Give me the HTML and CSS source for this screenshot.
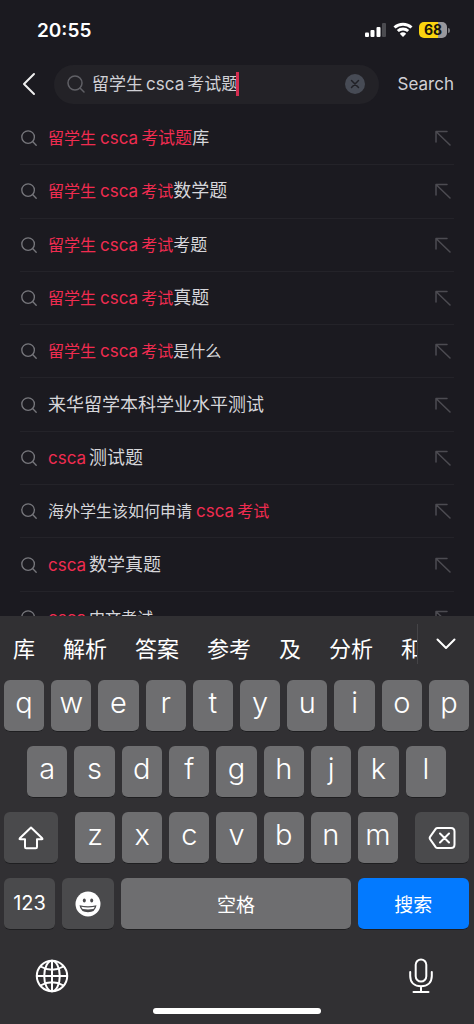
FILE: index.html
```html
<!DOCTYPE html>
<html lang="zh-CN">
<head>
<meta charset="utf-8">
<meta name="viewport" content="width=device-width, initial-scale=1">
<title>Search</title>
<link rel="stylesheet" href="styles.css">
</head>
<body>
<svg class="defs" aria-hidden="true">
  <symbol id="magnifier" viewBox="0 0 20 20"><circle cx="9" cy="9" r="7"/><path d="M14 14l4 4"/></symbol>
  <symbol id="fill" viewBox="0 0 16 16"><path d="M1 12V1.500H12M1.500 2L15 15"/></symbol>
</svg>
<div class="app">
  <header class="status">
    <time class="clock">20:55</time>
    <div class="indicators">
      <svg class="signal" viewBox="0 0 22 16" aria-hidden="true"><rect x="0" y="10.500" width="4" height="4.500" rx="1"/><rect x="5.500" y="8" width="4" height="7" rx="1"/><rect x="11.500" y="5" width="4" height="10" rx="1"/><rect class="off" x="17" y="1" width="4" height="14" rx="1"/></svg>
      <svg class="wifi" viewBox="0 0 20 16" aria-hidden="true"><path class="arc" d="M1.500 5.500a12.500 12.500 0 0 1 17 0M4.800 9a7.700 7.700 0 0 1 10.400 0"/><path d="M10 15l-3.200-3.300a4.700 4.700 0 0 1 6.400 0z"/></svg>
      <div class="battery"><span class="level">68</span><span class="cap"></span></div>
    </div>
  </header>

  <form class="searchbar" role="search">
    <button type="button" class="back" aria-label="返回"><svg viewBox="0 0 14 24"><path d="M12 2L2 12l10 10"/></svg></button>
    <div class="field">
      <svg class="lens"><use href="#magnifier"/></svg>
      <div class="entry">
        <input type="text" class="query" aria-label="搜索" value="留学生&#8201;csca&#8201;考试题">
        <span class="caret"></span>
      </div>
      <button type="button" class="clear" aria-label="清除"><svg viewBox="0 0 20 20"><circle cx="10" cy="10" r="10"/><path d="M6.500 6.500l7 7m0-7l-7 7"/></svg></button>
    </div>
    <button type="submit" class="submit">Search</button>
  </form>

  <main class="results">
    <ul class="list">
      <li class="row"><svg class="mag"><use href="#magnifier"/></svg><a href="#" class="text"><em><span class="s">留学生</span><b>csca</b><span class="m">考试题</span></em><span class="m">库</span></a><button type="button" class="fill" aria-label="填入"><svg><use href="#fill"/></svg></button></li>
      <li class="row"><svg class="mag"><use href="#magnifier"/></svg><a href="#" class="text"><em><span class="s">留学生</span><b>csca</b><span class="s">考试</span></em>数学题</a><button type="button" class="fill" aria-label="填入"><svg><use href="#fill"/></svg></button></li>
      <li class="row"><svg class="mag"><use href="#magnifier"/></svg><a href="#" class="text"><em><span class="s">留学生</span><b>csca</b><span class="s">考试</span></em><span class="m">考题</span></a><button type="button" class="fill" aria-label="填入"><svg><use href="#fill"/></svg></button></li>
      <li class="row"><svg class="mag"><use href="#magnifier"/></svg><a href="#" class="text"><em><span class="s">留学生</span><b>csca</b><span class="s">考试</span></em>真题</a><button type="button" class="fill" aria-label="填入"><svg><use href="#fill"/></svg></button></li>
      <li class="row"><svg class="mag"><use href="#magnifier"/></svg><a href="#" class="text"><em><span class="s">留学生</span><b>csca</b><span class="s">考试</span></em><span class="s">是什么</span></a><button type="button" class="fill" aria-label="填入"><svg><use href="#fill"/></svg></button></li>
      <li class="row"><svg class="mag"><use href="#magnifier"/></svg><a href="#" class="text">来华留学本科学业水平测试</a><button type="button" class="fill" aria-label="填入"><svg><use href="#fill"/></svg></button></li>
      <li class="row"><svg class="mag"><use href="#magnifier"/></svg><a href="#" class="text"><em><b class="lead">csca</b></em>测试题</a><button type="button" class="fill" aria-label="填入"><svg><use href="#fill"/></svg></button></li>
      <li class="row"><svg class="mag"><use href="#magnifier"/></svg><a href="#" class="text"><span class="s">海外学生该如何申请</span><em><b>csca</b><span class="s">考试</span></em></a><button type="button" class="fill" aria-label="填入"><svg><use href="#fill"/></svg></button></li>
      <li class="row"><svg class="mag"><use href="#magnifier"/></svg><a href="#" class="text"><em><b class="lead">csca</b></em>数学真题</a><button type="button" class="fill" aria-label="填入"><svg><use href="#fill"/></svg></button></li>
      <li class="row"><svg class="mag"><use href="#magnifier"/></svg><a href="#" class="text"><em><b class="lead">csca</b></em><span class="s">中文考试</span></a><button type="button" class="fill" aria-label="填入"><svg><use href="#fill"/></svg></button></li>
    </ul>
  </main>

  <section class="keyboard" aria-label="键盘">
    <div class="candidates">
      <div class="words"><button type="button">库</button><button type="button">解析</button><button type="button">答案</button><button type="button">参考</button><button type="button">及</button><button type="button">分析</button><button type="button">和</button></div>
      <button type="button" class="expand" aria-label="展开"><svg viewBox="0 0 20 12"><path d="M1.500 1.500L10 10l8.500-8.500"/></svg></button>
    </div>
    <div class="keys">
      <div class="keyrow"><button type="button" class="key">q</button><button type="button" class="key">w</button><button type="button" class="key">e</button><button type="button" class="key">r</button><button type="button" class="key">t</button><button type="button" class="key">y</button><button type="button" class="key">u</button><button type="button" class="key">i</button><button type="button" class="key">o</button><button type="button" class="key">p</button></div>
      <div class="keyrow inset"><button type="button" class="key">a</button><button type="button" class="key">s</button><button type="button" class="key">d</button><button type="button" class="key">f</button><button type="button" class="key">g</button><button type="button" class="key">h</button><button type="button" class="key">j</button><button type="button" class="key">k</button><button type="button" class="key">l</button></div>
      <div class="keyrow third">
        <button type="button" class="key dark side" aria-label="大写"><svg class="shift" viewBox="0 0 26 24"><path d="M13 1.500L1.800 12.300q-.7 .9 .4 .9H7v7.800q0 1.200 1.200 1.200h9.600q1.200 0 1.200-1.200v-7.800h4.800q1.100 0 .4-.9z"/></svg></button>
        <div class="keyrow letters"><button type="button" class="key">z</button><button type="button" class="key">x</button><button type="button" class="key">c</button><button type="button" class="key">v</button><button type="button" class="key">b</button><button type="button" class="key">n</button><button type="button" class="key">m</button></div>
        <button type="button" class="key dark side" aria-label="删除"><svg class="delete" viewBox="0 0 28 24"><path d="M9.500 2H23q3.500 0 3.500 3.500v13Q26.500 22 23 22H9.500q-1 0-1.800-.8L2.200 13.400q-1-1.400 0-2.800L7.700 2.800Q8.500 2 9.500 2zM12 7.500l9 9m0-9l-9 9"/></svg></button>
      </div>
      <div class="keyrow bottom">
        <button type="button" class="key dark num">123</button>
        <button type="button" class="key dark" aria-label="表情"><svg class="smile" viewBox="0 0 26 26"><circle class="face" cx="13" cy="13" r="12.500"/><ellipse cx="9.300" cy="9.500" rx="1.500" ry="2.100"/><ellipse cx="16.700" cy="9.500" rx="1.500" ry="2.100"/><path d="M4.500 14.200q8.500 2.300 17 0-1 7-8.500 7t-8.500-7z"/><path class="teeth" d="M6.300 15.800q6.700 1.500 13.400 0-.5 1.800-1.400 2.200-5.300.9-10.600 0-1-.6-1.400-2.200z"/></svg></button>
        <button type="button" class="key word">空格</button>
        <button type="button" class="key word blue">搜索</button>
      </div>
    </div>
    <div class="tools">
      <button type="button" class="tool" aria-label="切换键盘"><svg class="globe" viewBox="0 0 34 34"><circle cx="17" cy="17" r="15.200"/><ellipse cx="17" cy="17" rx="7.800" ry="15.200"/><path d="M17 1.800v30.400M1.800 17h30.400M5.500 7.500q11.500 6.500 23 0M5.500 26.500q11.500-6.500 23 0"/></svg></button>
      <button type="button" class="tool" aria-label="听写"><svg class="mic" viewBox="0 0 24 36"><rect x="6.700" y="1.500" width="10.600" height="22" rx="5.300"/><path d="M1.200 14v4c0 6.500 4.300 10.300 10.800 10.300s10.800-3.800 10.800-10.300v-4M12 28.300v5.700M4.500 34h15"/></svg></button>
    </div>
    <div class="home"></div>
  </section>
</div>
</body>
</html>
```
FILE: styles.css
```css
* { box-sizing: border-box; }
body {
  margin: 0;
  background: #1b1a20;
  color: #d6d6da;
  font-family: Inter, "Noto Sans CJK SC", sans-serif;
}
button { padding: 0; border: 0; background: none; color: inherit; font: inherit; }
svg { display: block; fill: none; stroke-linecap: round; stroke-linejoin: round; }
.defs { position: absolute; width: 0; height: 0; }
.app { display: flex; flex-direction: column; height: 100vh; overflow: hidden; }

.status {
  display: flex;
  flex: none;
  align-items: center;
  justify-content: space-between;
  height: 60px;
  padding: 0 24px 0 37px;
  color: #fff;
}
.clock { font-size: 19px; font-weight: 600; }
.indicators { display: flex; align-items: center; gap: 6px; }
.signal { width: 22px; height: 16px; fill: #fff; }
.signal .off { fill: #4b4b50; }
.wifi { width: 20px; height: 16px; fill: #fff; }
.wifi .arc { fill: none; stroke: #fff; stroke-width: 3; stroke-linecap: butt; }
.battery { display: flex; align-items: center; gap: 1px; }
.level {
  width: 28px;
  border-radius: 5px;
  background: linear-gradient(90deg, #fbd40f 68%, #98979c 68%);
  color: #17150a;
  font-size: 14px;
  font-weight: 700;
  line-height: 16px;
  text-align: center;
}
.cap { width: 2px; height: 5px; border-radius: 0 2px 2px 0; background: #77777b; }

.searchbar {
  display: flex;
  flex: none;
  align-items: center;
  height: 52px;
  padding: 0 20px 4px 22px;
}
.back { width: 14px; height: 24px; margin-right: 18px; }
.back svg { width: 14px; height: 24px; stroke: #eee; stroke-width: 2; }
.field {
  display: flex;
  flex: 1;
  align-items: center;
  min-width: 0;
  height: 39px;
  padding: 0 14px 0 12px;
  border-radius: 20px;
  background: #232227;
}
.lens { width: 20px; height: 20px; stroke: #606066; stroke-width: 1.5; }
.entry { position: relative; flex: 1; min-width: 0; margin-left: 6px; }
.query {
  display: block;
  width: 100%;
  padding: 0;
  border: 0;
  outline: 0;
  background: none;
  color: #d0d0d5;
  font: 17px/24px Inter, "Noto Sans CJK SC", sans-serif;
}
.caret { position: absolute; top: 0; left: 144px; width: 3px; height: 24px; background: #d52d50; }
.clear svg { width: 20px; height: 20px; fill: #474b55; stroke: #202026; stroke-width: 1.5; }
.clear circle { stroke: none; }
.submit { margin-left: 19px; color: #d0d0d5; font-size: 17px; }

.results { flex: 1; min-height: 0; overflow: hidden; }
.list {
  display: grid;
  grid-template-rows: repeat(10, 1fr);
  height: calc(100% + 29px);
  margin: 0;
  padding: 0 20px;
  list-style: none;
}
.row { display: flex; align-items: center; border-bottom: 1px solid #242329; }
.mag { flex: none; width: 18px; height: 18px; stroke: #77777c; stroke-width: 1.5; }
.text {
  flex: 1;
  margin-left: 10px;
  color: #d6d6da;
  font-size: 18px;
  line-height: 26px;
  text-decoration: none;
  white-space: nowrap;
}
.text em { color: #f02c50; font-style: normal; }
.text b { margin: 0 3px 0 4px; font-size: 17px; font-weight: 400; }
.text .lead { margin-left: 0; }
.s { font-size: 16px; }
.m { font-size: 17px; }
.fill svg { width: 16px; height: 16px; margin-right: 3px; stroke: #4c4b51; stroke-width: 1.5; }

.keyboard { flex: none; background: #313033; color: #fff; }
.candidates { display: flex; height: 64px; padding-top: 8px; }
.words {
  display: flex;
  flex: 1;
  gap: 28px;
  min-width: 0;
  height: 40px;
  padding: 9px 0 0 13px;
  overflow: hidden;
  border-right: 1px solid #454447;
  font-size: 22px;
  line-height: 32px;
}
.words button { flex: none; white-space: nowrap; }
.expand { width: 56px; height: 40px; }
.expand svg { width: 20px; height: 12px; margin: 0 auto; stroke: #fff; stroke-width: 2; }
.keys { display: flex; flex-direction: column; gap: 14px; padding: 0 5px 0 4px; }
.keyrow { display: flex; gap: 7px; }
.inset { padding: 0 23px; }
.third { gap: 17px; }
.letters { flex: 1; }
.key {
  display: flex;
  flex: 1;
  align-items: center;
  justify-content: center;
  min-width: 0;
  height: 52px;
  padding-bottom: 6px;
  border-bottom: 1px solid #1f1f21;
  border-radius: 6px;
  background: #6e6e70;
  font-size: 29px;
  font-weight: 300;
}
.dark { background: #4a4a4c; padding-bottom: 0; }
.side { flex: none; width: 54px; }
.bottom { display: grid; grid-template-columns: 51fr 52fr 229fr 111fr; }
.num { padding-bottom: 2px; font-size: 20px; font-weight: 400; }
.word { padding-bottom: 0; font-size: 19px; font-weight: 400; }
.blue { background: #037aff; }
.shift { width: 26px; height: 24px; stroke: #fff; stroke-width: 2; }
.delete { width: 28px; height: 24px; stroke: #fff; stroke-width: 2; }
.smile { width: 26px; height: 26px; fill: #4a4a4c; }
.smile .face, .smile .teeth { fill: #fff; }
.tools { display: flex; align-items: center; justify-content: space-between; height: 92px; padding: 0 41px 0 35px; }
.globe { width: 34px; height: 34px; stroke: #fff; stroke-width: 2; }
.mic { width: 24px; height: 36px; stroke: #fff; stroke-width: 2; }
.home { width: 168px; height: 6px; margin: -14px auto 10px; border-radius: 3px; background: #fff; }
```
